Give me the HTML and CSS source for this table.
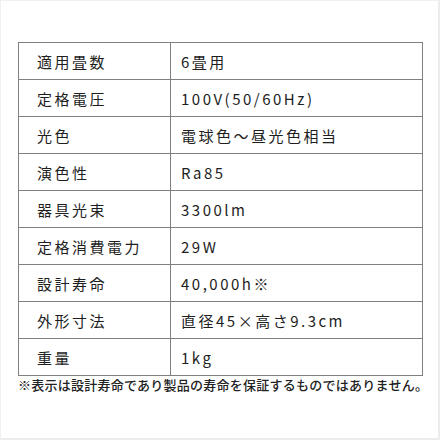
FILE: index.html
```html
<!DOCTYPE html>
<html lang="ja">
<head>
<meta charset="utf-8">
<link rel="stylesheet" href="styles.css">
</head>
<body>
<div class="frame">
  <table class="spec">
    <tr><th>適用畳数</th><td>6畳用</td></tr>
    <tr><th>定格電圧</th><td>100V(50/60Hz)</td></tr>
    <tr><th>光色</th><td>電球色～昼光色相当</td></tr>
    <tr><th>演色性</th><td>Ra85</td></tr>
    <tr><th>器具光束</th><td>3300lm</td></tr>
    <tr><th>定格消費電力</th><td>29W</td></tr>
    <tr><th>設計寿命</th><td>40,000h※</td></tr>
    <tr><th>外形寸法</th><td>直径45×高さ9.3cm</td></tr>
    <tr><th>重量</th><td>1kg</td></tr>
  </table>
  <p class="note">※表示は設計寿命であり製品の寿命を保証するものではありません。</p>
</div>
</body>
</html>
```

FILE: styles.css
```css
html, body {
  margin: 0;
  padding: 0;
  background: #fff;
}
.frame {
  box-sizing: border-box;
  width: 440px;
  height: 440px;
  border: 1px solid #f0f0f0;
  border-right: 2px solid #ececec;
  border-bottom: 2px solid #ececec;
  padding: 41px 0 0 17px;
  font-family: "Noto Sans CJK JP", "Noto Sans", sans-serif;
  color: #1e1e1e;
}
.spec {
  border-collapse: collapse;
  width: 405px;
  border: 1.5px solid #808080;
}
.spec th, .spec td {
  border: 1px solid #808080;
  height: 36px;
  padding: 0 0 0 18px;
  font-size: 15px;
  font-weight: 400;
  letter-spacing: 2.5px;
  text-align: left;
  vertical-align: middle;
  line-height: 1;
}
.spec th {
  width: 133px;
}
.spec td {
  padding-left: 10px;
}
.note {
  margin: 1px 0 0 0;
  font-size: 13px;
  line-height: 16px;
  font-weight: 500;
  letter-spacing: 0.25px;
  color: #222;
  white-space: nowrap;
}
```
